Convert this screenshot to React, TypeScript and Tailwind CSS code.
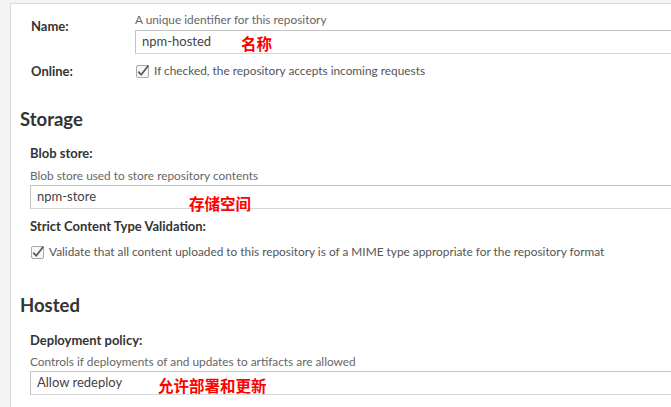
import React from "react";

const font = { fontFamily: "Lato, 'Liberation Sans', sans-serif" };

function Check() {
  return (
    <svg width="13" height="13" viewBox="0 0 13 13" className="shrink-0 overflow-visible">
      <rect x="0.5" y="0.5" width="12" height="12" rx="1.5" fill="#f7f7f7" stroke="#a9a9a9" />
      <path d="M2.3 6.6 L5.2 9.8 L12.4 0.6" fill="none" stroke="#555" strokeWidth="1.7" />
    </svg>
  );
}

function Note({ text, className }: { text: string; className: string }) {
  return (
    <span
      className={"absolute font-bold text-[15.5px] leading-none text-[#ff0000] " + className}
      style={{ fontFamily: "'Noto Sans CJK SC', sans-serif" }}
    >
      {text}
    </span>
  );
}

function Field({ value, children }: { value: string; children?: React.ReactNode }) {
  return (
    <div className="relative h-[24px] border border-[#c4c4c4] border-b-[#d6d6d6] bg-white pl-[6px] flex items-center text-[13px] text-[#444]">
      {value}
      {children}
    </div>
  );
}

export default function App() {
  return (
    <div className="h-[407px] w-[671px] overflow-hidden bg-[#f3f3f3] pt-[3px] pl-[10px]" style={font}>
      <div className="h-[420px] w-[720px] bg-white border-l border-t border-[#dcdcdc] pt-[9px] pl-[9px]">
        <div className="flex">
          <div className="w-[115px] pl-[11px] pt-[6px] text-[13px] leading-[14px] font-bold text-[#333]">Name:</div>
          <div className="flex-1">
            <div className="text-[11.85px] leading-[14px] text-[#666]">A unique identifier for this repository</div>
            <div className="mt-[3px]">
              <Field value="npm-hosted">
                <Note text="名称" className="left-[105px] top-[5px]" />
              </Field>
            </div>
          </div>
        </div>
        <div className="flex mt-[10px] items-center">
          <div className="w-[115px] pl-[11px] text-[13px] leading-[14px] font-bold text-[#333]">Online:</div>
          <div className="flex items-center gap-[5px] pl-[1px] text-[11.85px] leading-[14px] text-[#555]">
            <Check />
            If checked, the repository accepts incoming requests
          </div>
        </div>

        <h2 className="mt-[30px] text-[18.5px] leading-[22px] font-bold text-[#333]">Storage</h2>
        <div className="pl-[10px]">
          <div className="mt-[16px] text-[13px] leading-[14px] font-bold text-[#333]">Blob store:</div>
          <div className="mt-[9px] text-[11.85px] leading-[14px] text-[#666]">Blob store used to store repository contents</div>
          <div className="mt-[2px]">
            <Field value="npm-store">
              <Note text="存储空间" className="left-[158px] top-[10px]" />
            </Field>
          </div>
          <div className="mt-[10px] text-[13px] leading-[14px] font-bold text-[#333]">Strict Content Type Validation:</div>
          <div className="mt-[12px] flex items-center gap-[5px] pl-[1px] text-[11.85px] leading-[14px] text-[#555]">
            <Check />
            Validate that all content uploaded to this repository is of a MIME type appropriate for the repository format
          </div>
        </div>

        <h2 className="mt-[35px] text-[18.5px] leading-[22px] font-bold text-[#333]">Hosted</h2>
        <div className="pl-[10px]">
          <div className="mt-[17px] text-[13px] leading-[14px] font-bold text-[#333]">Deployment policy:</div>
          <div className="mt-[8px] text-[11.85px] leading-[14px] text-[#666]">Controls if deployments of and updates to artifacts are allowed</div>
          <div className="mt-[2px]">
            <Field value="Allow redeploy">
              <Note text="允许部署和更新" className="left-[127px] top-[6px]" />
            </Field>
          </div>
        </div>
      </div>
    </div>
  );
}
